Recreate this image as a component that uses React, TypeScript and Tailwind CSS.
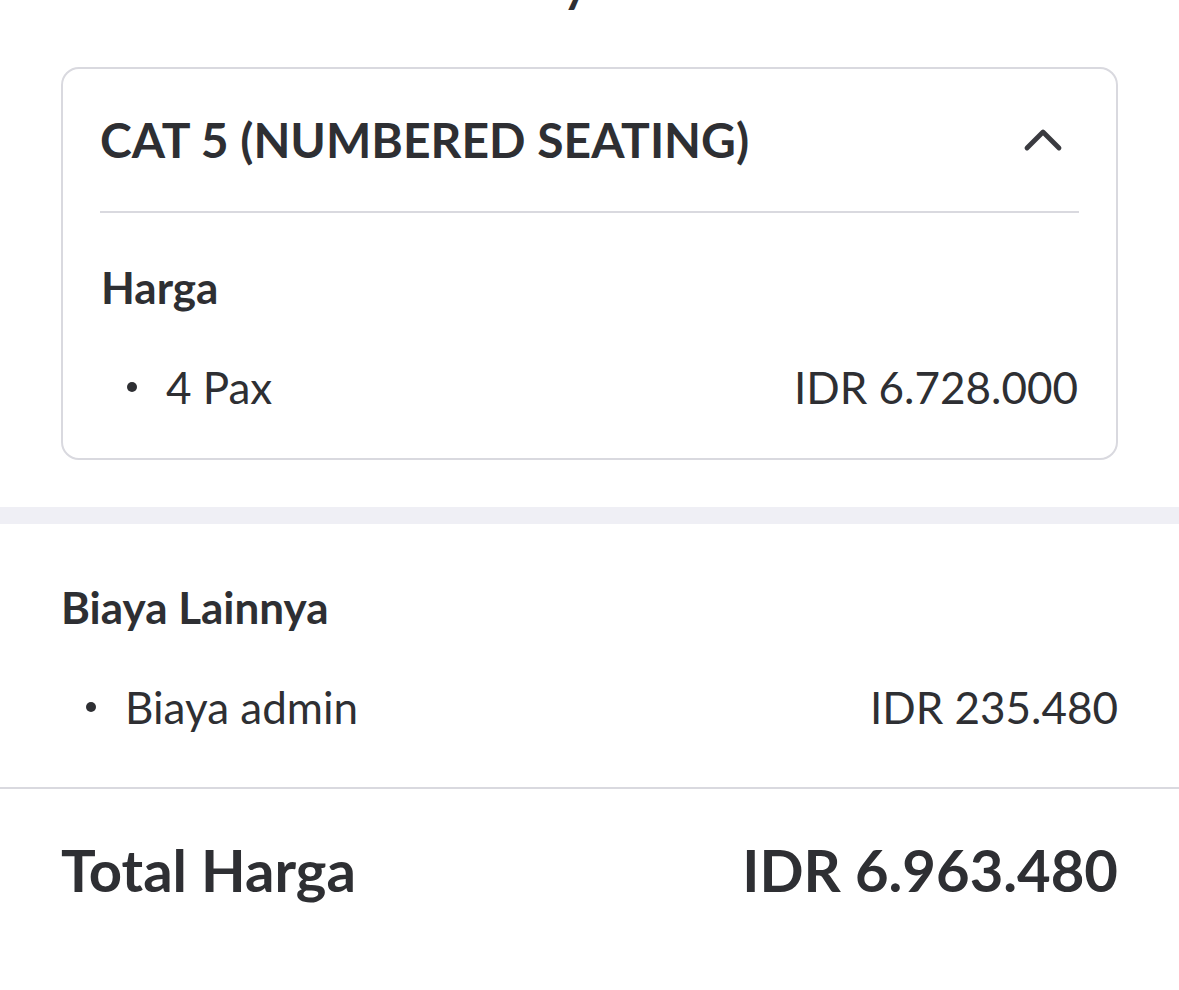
import { ChevronUp } from "lucide-react";

const font = { fontFamily: "Lato, 'Noto Sans', sans-serif" };

function Row({ label, value, indent }: { label: string; value: string; indent: string }) {
  return (
    <div className="flex items-center justify-between h-[60px]">
      <div className={`flex items-center ${indent}`}>
        <span className="w-[10px] h-[10px] rounded-full bg-[#2e2f33]" />
        <span className="ml-[29px] text-[44px] text-[#2e2f33]">{label}</span>
      </div>
      <span className="text-[44px] text-[#2e2f33]">{value}</span>
    </div>
  );
}

export default function App() {
  return (
    <div className="w-[1179px] h-[990px] bg-white overflow-hidden" style={font}>
      {/* cut-off page heading */}
      <div className="h-[12px] overflow-hidden flex justify-center">
        <span className="-mt-[40px] ml-[-28px] text-[48px] font-bold leading-[48px] text-[#2e2f33]">y</span>
      </div>

      <div className="px-[61px] pt-[55px]">
        <div className="rounded-[18px] border-2 border-[#d9d9df]">
          <div className="mx-[37px] flex items-center justify-between h-[144px] border-b-2 border-[#d9d9df]">
            <h2 className="text-[48px] font-bold leading-none text-[#2e2f33]">CAT 5 (NUMBERED SEATING)</h2>
            <ChevronUp size={64} strokeWidth={1.8} className="text-[#3a3b40] mr-[4px]" />
          </div>
          <div className="px-[38px] pt-[46px] pb-[41px]">
            <div className="text-[44px] font-bold leading-[56px] text-[#2e2f33]">Harga</div>
            <div className="mt-[42px]">
              <Row label="4 Pax" value="IDR 6.728.000" indent="pl-[26px]" />
            </div>
          </div>
        </div>
      </div>

      <div className="mt-[47px] h-[17px] bg-[#efeff5]" />

      <div className="px-[61px] pt-[55px] pb-[50px]">
        <div className="text-[44px] font-bold leading-[56px] text-[#2e2f33]">Biaya Lainnya</div>
        <div className="mt-[42px]">
          <Row label="Biaya admin" value="IDR 235.480" indent="pl-[25px]" />
        </div>
      </div>

      <div className="h-[2px] bg-[#d9d9df]" />

      <div className="px-[61px] pt-[49px] flex items-center justify-between">
        <span className="text-[58px] font-bold leading-[64px] text-[#2e2f33]">Total Harga</span>
        <span className="text-[58px] font-bold leading-[64px] text-[#2e2f33]">IDR 6.963.480</span>
      </div>
    </div>
  );
}
